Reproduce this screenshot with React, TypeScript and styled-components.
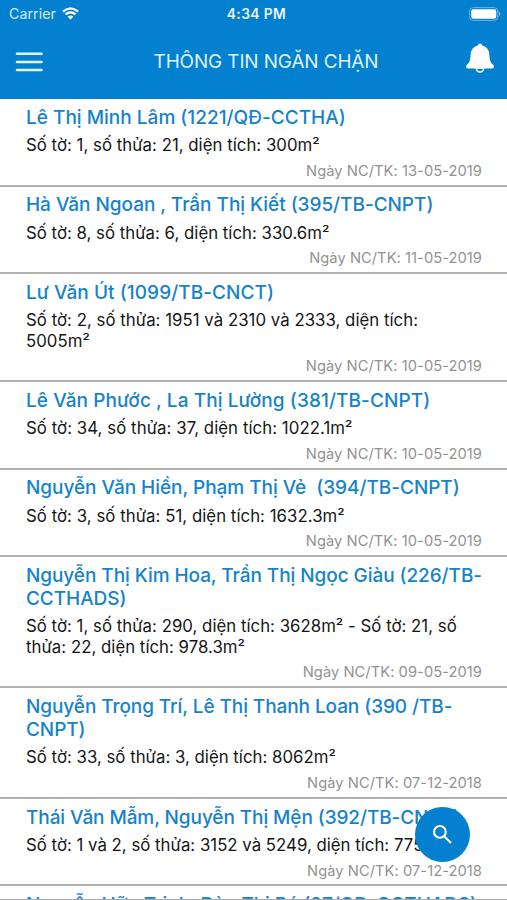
import React from "react";
import styled, { createGlobalStyle } from "styled-components";

const Global = createGlobalStyle`
  * { box-sizing: border-box; }
  html, body { margin: 0; background: #fff; }
  body { font-family: Inter, "Noto Sans", sans-serif; overflow: hidden; }
`;

const Screen = styled.div`
  position: relative;
  width: 507px;
  height: 900px;
  overflow: hidden;
  background: #fff;
  display: flex;
  flex-direction: column;
`;

const Header = styled.header`
  flex: none;
  height: 98.6px;
  background: #0380d0;
  color: #fff;
`;

const StatusBar = styled.div`
  display: grid;
  grid-template-columns: 1fr auto 1fr;
  align-items: center;
  height: 27px;
  padding: 0 6px 0 9px;
`;

const Carrier = styled.div`
  display: flex;
  align-items: center;
  gap: 6px;
  font-size: 14.2px;
  letter-spacing: 0.05px;
  color: #d3ecfa;
`;

const Clock = styled.div`
  margin-right: -3px;
  font-size: 13.8px;
  font-weight: 600;
  letter-spacing: 0.4px;
  color: #eaf6fd;
`;

const BatterySlot = styled.div`
  display: flex;
  justify-content: flex-end;
`;

const NavBar = styled.div`
  display: grid;
  grid-template-columns: 70px 1fr 48px;
  align-items: center;
  height: 69px;
  padding: 0 12px 0 15px;
`;

const Heading = styled.h1`
  margin: 0;
  text-align: center;
  font-size: 18.9px;
  font-weight: 400;
  letter-spacing: -0.1px;
  color: #dff2fc;
`;

const BellSlot = styled.div`
  display: flex;
  justify-content: flex-end;
  padding-bottom: 7px;
`;

const List = styled.ul`
  flex: 1;
  min-height: 0;
  margin: 0;
  padding: 0.75px 0 0;
  list-style: none;
  overflow: hidden;
  border-bottom: 1px solid #a9a9a9;
`;

const Row = styled.li`
  display: flex;
  flex-direction: column;
  padding: 6.55px 25px 0 26px;
  border-bottom: 2px solid #b0b0b0;
`;

const Name = styled.div<{ $track: number }>`
  font-size: 19px;
  line-height: 23.2px;
  font-weight: 500;
  letter-spacing: ${(p) => p.$track}px;
  color: #1583cb;
  white-space: pre;
`;

const Detail = styled.div<{ $track: number }>`
  margin-top: 6.1px;
  font-size: 16.8px;
  line-height: 20.6px;
  letter-spacing: ${(p) => p.$track}px;
  color: #151515;
  white-space: pre;
`;

const Issued = styled.div`
  height: 29px;
  padding-top: 6.1px;
  font-size: 14.7px;
  line-height: 18px;
  letter-spacing: 0.05px;
  text-align: right;
  color: #929292;
`;

const SearchButton = styled.button`
  position: absolute;
  left: 415px;
  top: 807px;
  width: 55px;
  height: 55px;
  padding: 0;
  border: 0;
  border-radius: 50%;
  background: #0380d0;
  display: flex;
  align-items: center;
  justify-content: center;
`;

const WifiIcon = () => (
  <svg width="17" height="13" viewBox="0 0 17 13" fill="none" stroke="#fff" strokeWidth="2.2">
    <path d="M.9 4.6Q8.5-2 16.1 4.6M3.5 7.4Q8.5 3.2 13.5 7.4" />
    <path d="M8.5 12.6 5.6 9.7Q8.5 7.5 11.4 9.7Z" fill="#fff" stroke="none" />
  </svg>
);

const BatteryIcon = () => (
  <svg width="32" height="14" viewBox="0 0 32 14">
    <rect x=".6" y=".6" width="28.3" height="12.8" rx="3.8" fill="none" stroke="#6cb5e4" />
    <rect x="2.2" y="2.2" width="25.1" height="9.6" rx="2.2" fill="#fff" />
    <path d="M30 4.8Q31.5 5.5 31.5 7T30 9.2Z" fill="#6cb5e4" />
  </svg>
);

const MenuIcon = () => (
  <svg width="28" height="20" viewBox="0 0 28 20" stroke="#e4f4fd" strokeWidth="2.5" strokeLinecap="round">
    <path d="M2 1.8H26.6M2 9.9H26.6M2 18H26.6" />
  </svg>
);

const BellIcon = () => (
  <svg width="30" height="30" viewBox="0 0 30 30" fill="#fff">
    <path d="M15 .5c1.2 0 2 .8 2.1 1.9 4.3 1 6.9 4.2 7.2 8.6.3 5.5.8 8.2 3.6 10.6.7.6 1.1 1.2 1.1 2 0 1.200-.9 2-2.200 2H3.200C1.900 25.600 1 24.800 1 23.600c0-.8.400-1.400 1.100-2 2.800-2.400 3.300-5.100 3.600-10.600.3-4.400 2.900-7.600 7.200-8.600C13 1.300 13.800.5 15 .5Z" />
    <path d="M11.300 25.300a3.700 3.600 0 0 0 7.400 0Z" fill="#0380d0" stroke="#fff" strokeWidth="1.500" />
  </svg>
);

const SearchIcon = () => (
  <svg width="21" height="21" viewBox="0 0 20 20" fill="none" stroke="#fff" strokeWidth="2">
    <circle cx="7.500" cy="7.500" r="5.600" />
    <path d="m11.600 11.600 6.500 6.500" />
  </svg>
);

interface Entry {
  name: string;
  nameTrack: number;
  detail: string;
  detailTrack: number;
  date: string;
}

const entries: Entry[] = [
  { name: "Lê Thị Minh Lâm (1221/QĐ-CCTHA)", nameTrack: 0.01, detail: "Số tờ: 1, số thửa: 21, diện tích: 300m²", detailTrack: 0.02, date: "13-05-2019" },
  { name: "Hà Văn Ngoan , Trần Thị Kiết (395/TB-CNPT)", nameTrack: -0.04, detail: "Số tờ: 8, số thửa: 6, diện tích: 330.6m²", detailTrack: 0.01, date: "11-05-2019" },
  { name: "Lư Văn Út (1099/TB-CNCT)", nameTrack: 0.06, detail: "Số tờ: 2, số thửa: 1951 và 2310 và 2333, diện tích:\n5005m²", detailTrack: 0.03, date: "10-05-2019" },
  { name: "Lê Văn Phước , La Thị Lường (381/TB-CNPT)", nameTrack: 0.08, detail: "Số tờ: 34, số thửa: 37, diện tích: 1022.1m²", detailTrack: 0.06, date: "10-05-2019" },
  { name: "Nguyễn Văn Hiền, Phạm Thị Vẻ  (394/TB-CNPT)", nameTrack: -0.04, detail: "Số tờ: 3, số thửa: 51, diện tích: 1632.3m²", detailTrack: 0.04, date: "10-05-2019" },
  { name: "Nguyễn Thị Kim Hoa, Trần Thị Ngọc Giàu (226/TB-\nCCTHADS)", nameTrack: -0.07, detail: "Số tờ: 1, số thửa: 290, diện tích: 3628m² - Số tờ: 21, số\nthửa: 22, diện tích: 978.3m²", detailTrack: 0.02, date: "09-05-2019" },
  { name: "Nguyễn Trọng Trí, Lê Thị Thanh Loan (390 /TB-\nCNPT)", nameTrack: -0.08, detail: "Số tờ: 33, số thửa: 3, diện tích: 8062m²", detailTrack: 0.01, date: "07-12-2018" },
  { name: "Thái Văn Mẫm, Nguyễn Thị Mện (392/TB-CNPT)", nameTrack: -0.09, detail: "Số tờ: 1 và 2, số thửa: 3152 và 5249, diện tích: 775m²", detailTrack: 0.01, date: "07-12-2018" },
  { name: "Nguyễn Hữu Trinh, Đào Thị Bé (27/QĐ-CCTHADS)", nameTrack: -0.06, detail: "", detailTrack: 0, date: "07-12-2018" },
];

export default function App() {
  return (
    <Screen>
      <Global />
      <Header>
        <StatusBar>
          <Carrier>
            Carrier
            <WifiIcon />
          </Carrier>
          <Clock>4:34 PM</Clock>
          <BatterySlot>
            <BatteryIcon />
          </BatterySlot>
        </StatusBar>
        <NavBar>
          <MenuIcon />
          <Heading>THÔNG TIN NGĂN CHẶN</Heading>
          <BellSlot>
            <BellIcon />
          </BellSlot>
        </NavBar>
      </Header>
      <List>
        {entries.map((e) => (
          <Row key={e.name}>
            <Name $track={e.nameTrack}>{e.name}</Name>
            <Detail $track={e.detailTrack}>{e.detail}</Detail>
            <Issued>Ngày NC/TK: {e.date}</Issued>
          </Row>
        ))}
      </List>
      <SearchButton aria-label="Tìm kiếm">
        <SearchIcon />
      </SearchButton>
    </Screen>
  );
}
